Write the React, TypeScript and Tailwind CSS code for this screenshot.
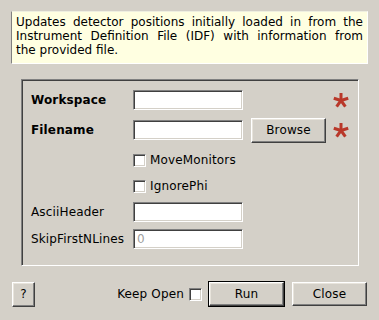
import React from "react";

const sunken =
  "border border-t-[#808080] border-l-[#808080] border-b-white border-r-white shadow-[inset_1px_1px_0_#404040,inset_-1px_-1px_0_#d4d0c8]";
const raised =
  "border border-t-white border-l-white border-b-[#404040] border-r-[#404040] shadow-[inset_-1px_-1px_0_#808080,inset_1px_1px_0_#e8e4dc]";

function Star() {
  // red "mandatory" asterisk
  return (
    <svg width="16" height="16" viewBox="0 0 16 16" className="block">
      <g stroke="#b9382a" strokeWidth="3" strokeLinecap="butt">
        <line x1="8" y1="8.5" x2="8" y2="1" />
        <line x1="8" y1="8.5" x2="15.2" y2="6.2" />
        <line x1="8" y1="8.5" x2="12.4" y2="14.6" />
        <line x1="8" y1="8.5" x2="3.6" y2="14.6" />
        <line x1="8" y1="8.5" x2="0.8" y2="6.2" />
      </g>
    </svg>
  );
}

function Field({ value }: { value?: string }) {
  return (
    <div className={`w-[110px] h-[20px] bg-white ${sunken} flex items-center pl-[3px] text-[#a0a0a0]`}>
      {value}
    </div>
  );
}

function Check() {
  return <div className={`w-[13px] h-[13px] bg-white ${sunken}`} />;
}

export default function App() {
  return (
    <div
      className="w-[379px] h-[320px] bg-[#d4d0c8] text-black text-[12px] tracking-[0.15px] flex flex-col overflow-hidden"
      style={{ fontFamily: '"DejaVu Sans", sans-serif' }}
    >
      <div className="ml-[11px] mt-[11px] w-[357px] h-[53px] bg-[#ffffe1] border border-l-[#808080] border-t-[#efefe0] border-r-white border-b-white pl-[4px] pr-[4px] pt-[3px] leading-[14px] tracking-normal">
        <span className="block text-justify [text-align-last:justify]">Updates detector positions initially loaded in from the</span>
        <span className="block text-justify [text-align-last:justify]">Instrument Definition File (IDF) with information from</span>
        <span className="block">the provided file.</span>
      </div>

      <div className="ml-[21px] mt-[15px] w-[338px] h-[187px] border border-t-[#808080] border-l-[#808080] border-b-white border-r-white shadow-[inset_1px_1px_0_#404040] pl-[9px] flex flex-col">
        <div className="mt-[8px] h-[24px] flex items-center">
          <div className="w-[102px] font-bold">Workspace</div>
          <Field />
          <div className="w-[83px]" />
          <div className="ml-[7px]"><Star /></div>
        </div>
        <div className="mt-[6px] h-[24px] flex items-center">
          <div className="w-[102px] font-bold">Filename</div>
          <Field />
          <div className="w-[83px] pl-[8px]">
            <div className={`w-[75px] h-[25px] ${raised} flex items-center justify-center`}>Browse</div>
          </div>
          <div className="ml-[7px]"><Star /></div>
        </div>
        <div className="mt-[6px] h-[24px] flex items-center pl-[102px]">
          <Check />
          <span className="ml-[4px]">MoveMonitors</span>
        </div>
        <div className="mt-[2px] h-[24px] flex items-center pl-[102px]">
          <Check />
          <span className="ml-[4px]">IgnorePhi</span>
        </div>
        <div className="mt-[2px] h-[24px] flex items-center">
          <div className="w-[102px]">AsciiHeader</div>
          <Field />
        </div>
        <div className="mt-[3px] h-[24px] flex items-center">
          <div className="w-[102px]">SkipFirstNLines</div>
          <Field value="0" />
        </div>
      </div>

      <div className="mt-[15px] h-[26px] flex items-center pr-[12px]">
        <div className={`ml-[12px] w-[23px] h-[25px] ${raised} flex items-center justify-center`}>?</div>
        <span className="ml-auto">Keep Open</span>
        <div className="ml-[5px]"><Check /></div>
        <div className="ml-[6px] w-[77px] h-[26px] border border-black">
          <div className={`w-full h-full ${raised} flex items-center justify-center`}>Run</div>
        </div>
        <div className={`ml-[7px] w-[75px] h-[24px] ${raised} flex items-center justify-center`}>Close</div>
      </div>
    </div>
  );
}
